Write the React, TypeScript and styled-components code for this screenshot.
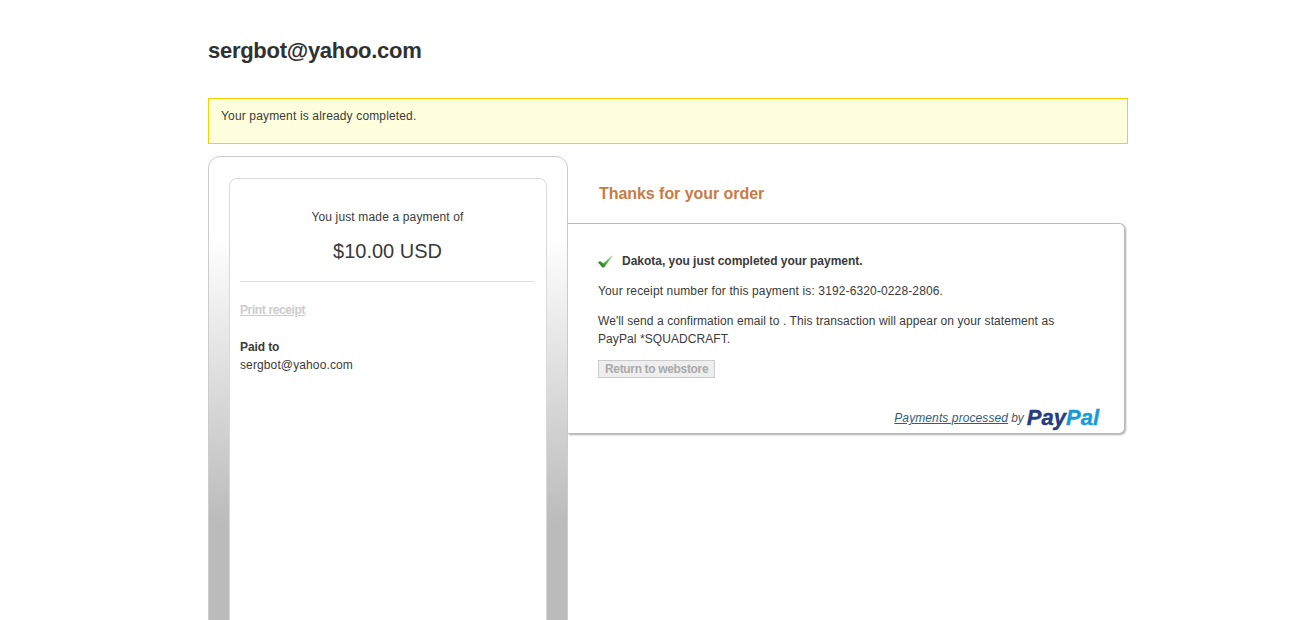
import React from 'react';
import styled, { createGlobalStyle } from 'styled-components';

const GlobalStyle = createGlobalStyle`
	html, body {
		margin: 0;
		padding: 0;
		height: 620px;
		overflow: hidden;
		background: #fff;
	}
	body {
		color: #3a3a3a;
		font-family: 'Liberation Sans', Arial, sans-serif;
		font-size: 12px;
		line-height: 18px;
	}
`;

const Page = styled.div`
	width: 920px;
	margin-left: 208px;
	height: 620px;
	overflow: hidden;
`;

const MerchantName = styled.h1`
	margin: 0;
	padding-top: 37px;
	height: 61px;
	box-sizing: border-box;
	color: #2f3132;
	font-size: 22px;
	letter-spacing: -0.28px;
	line-height: 28px;
	font-weight: bold;
`;

const Alert = styled.div`
	margin-top: 37px;
	height: 46px;
	box-sizing: border-box;
	padding: 8px 12px;
	background: #ffffdd;
	border: 1px solid #ffcc00;
	letter-spacing: 0.15px;
`;

const Columns = styled.div`
	display: flex;
	margin-top: 12px;
	align-items: flex-start;
`;

const Sidebar = styled.aside`
	width: 360px;
	height: 620px;
	flex: none;
	box-sizing: border-box;
	padding: 21px 20px 0;
	border: 1px solid #ccc;
	border-radius: 12px 12px 0 0;
	background: linear-gradient(to bottom, #fff 0, #fff 80px, #bbb 366px, #bbb 100%);
`;

const SidebarCard = styled.div`
	height: 600px;
	box-sizing: border-box;
	padding: 0 11px 0 10px;
	background: #fff;
	border: 1px solid #d9d9d9;
	border-radius: 8px 8px 0 0;
`;

const AmountBlock = styled.div`
	text-align: center;
	padding: 29px 0 16px;
	border-bottom: 1px solid #ddd;
`;

const AmountLabel = styled.div`
	line-height: 18px;
	letter-spacing: 0.15px;
`;

const Amount = styled.div`
	margin-top: 11px;
	font-size: 20px;
	line-height: 28px;
`;

const PrintLink = styled.a`
	display: block;
	margin-top: 19px;
	color: #ccc;
	font-weight: bold;
	letter-spacing: -0.38px;
	text-decoration: underline;
`;

const PaidTo = styled.div`
	margin-top: 19px;
`;

const PaidLabel = styled.div`
	font-weight: bold;
	letter-spacing: -0.1px;
`;

const PaidEmail = styled.div`
	letter-spacing: 0.12px;
`;

const Main = styled.main`
	width: 557px;
	flex: none;
`;

const ThanksTitle = styled.h2`
	margin: 0;
	height: 67px;
	box-sizing: border-box;
	padding: 28px 0 0 31px;
	color: #c87b42;
	font-size: 16px;
	letter-spacing: -0.05px;
	line-height: 20px;
	font-weight: bold;
`;

const Panel = styled.section`
	height: 211px;
	box-sizing: border-box;
	padding: 28px 24px 0 30px;
	background: #fff;
	border: 1px solid #bbb;
	border-left: none;
	border-radius: 0 6px 6px 0;
	box-shadow: 1px 1px 2px #aaa;
`;

const SuccessLine = styled.div`
	display: flex;
	align-items: center;
	gap: 9px;
	font-weight: bold;
	letter-spacing: -0.02px;
`;

const Paragraph = styled.p<{ $spacing: number }>`
	margin: 12px 0 0;
	width: 470px;
	letter-spacing: ${({ $spacing }) => $spacing}px;
`;

const ReturnButton = styled.button`
	display: block;
	margin-top: 12px;
	height: 18px;
	padding: 0 6px;
	background: #eee;
	border: 1px solid #ccc;
	color: #aaa;
	font-family: inherit;
	font-size: 12px;
	letter-spacing: -0.34px;
	line-height: 16px;
	font-weight: bold;
`;

const Footer = styled.div`
	display: flex;
	justify-content: flex-end;
	align-items: center;
	gap: 3px;
	margin-top: 29px;
	height: 22px;
	padding-right: 1px;
	font-style: italic;
	color: #555;
`;

const FooterLink = styled.a`
	color: #2c5e85;
	letter-spacing: 0.1px;
	text-decoration: underline;
`;

const Logo = styled.span`
	font-size: 22px;
	font-weight: bold;
	font-style: italic;
	line-height: 22px;
	-webkit-text-stroke: 0.4px currentColor;
`;

const LogoPart = styled.span<{ $light?: boolean }>`
	color: ${({ $light }) => ($light ? '#179bd7' : '#253b80')};
`;

const CheckIcon = () => (
	<svg width="15" height="13" viewBox="0 0 15 13">
		<defs>
			<linearGradient id="check" x1="0" y1="1" x2="1" y2="0">
				<stop offset="0" stopColor="#0f6a12" />
				<stop offset="0.5" stopColor="#5ab048" />
				<stop offset="1" stopColor="#d2f2c0" />
			</linearGradient>
		</defs>
		<path d="M0 7.5 L2 6 L5.5 8.5 L13.5 0.5 L15 1 L6 12.5 L4.5 12.5 Z" fill="url(#check)" />
	</svg>
);

export default function App() {
	return (
		<Page>
			<GlobalStyle />
			<MerchantName>sergbot@yahoo.com</MerchantName>
			<Alert>Your payment is already completed.</Alert>
			<Columns>
				<Sidebar>
					<SidebarCard>
						<AmountBlock>
							<AmountLabel>You just made a payment of</AmountLabel>
							<Amount>$10.00 USD</Amount>
						</AmountBlock>
						<PrintLink>Print receipt</PrintLink>
						<PaidTo>
							<PaidLabel>Paid to</PaidLabel>
							<PaidEmail>sergbot@yahoo.com</PaidEmail>
						</PaidTo>
					</SidebarCard>
				</Sidebar>
				<Main>
					<ThanksTitle>Thanks for your order</ThanksTitle>
					<Panel>
						<SuccessLine>
							<CheckIcon />
							<span>Dakota, you just completed your payment.</span>
						</SuccessLine>
						<Paragraph $spacing={0.13}>Your receipt number for this payment is: 3192-6320-0228-2806.</Paragraph>
						<Paragraph $spacing={0.08}>
							We'll send a confirmation email to . This transaction will appear on your statement as PayPal *SQUADCRAFT.
						</Paragraph>
						<ReturnButton>Return to webstore</ReturnButton>
						<Footer>
							<FooterLink>Payments processed</FooterLink> by{' '}
							<Logo>
								<LogoPart>Pay</LogoPart>
								<LogoPart $light>Pal</LogoPart>
							</Logo>
						</Footer>
					</Panel>
				</Main>
			</Columns>
		</Page>
	);
}
